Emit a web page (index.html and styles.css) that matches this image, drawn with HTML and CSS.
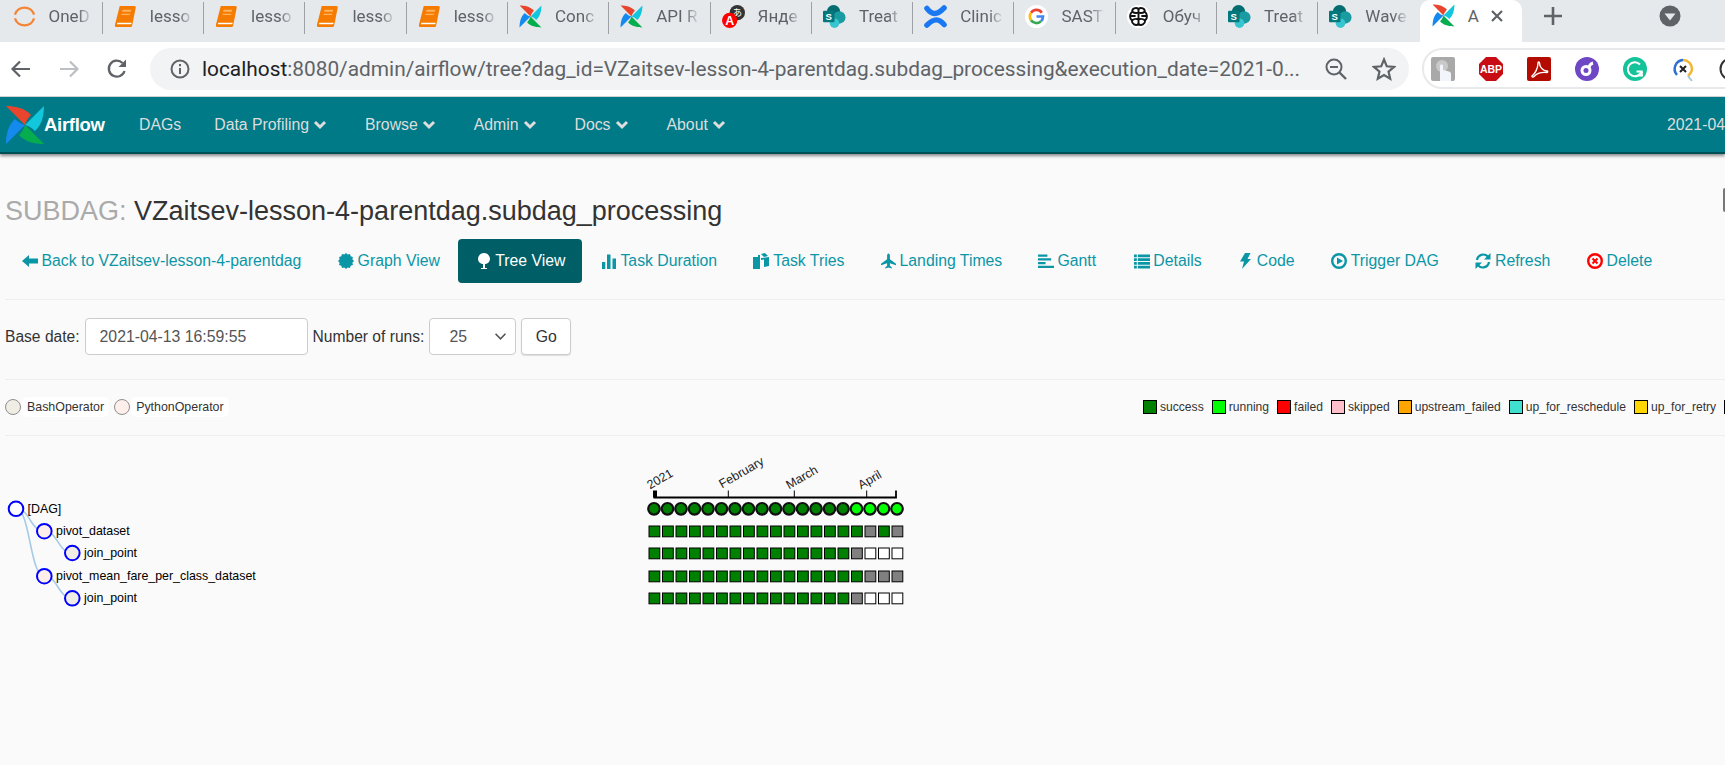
FILE: index.html
```html
<!DOCTYPE html>
<html lang="en">
<head>
    <meta charset="UTF-8">
    <meta name="viewport" content="width=device-width, initial-scale=1.0">
    <title>Airflow - Tree View</title>
    <link rel="stylesheet" href="styles.css">
</head>
<body>
    <!-- shared icons -->
    <svg class="defs" width="0" height="0">
        <defs>
            <symbol id="pin" viewBox="0 0 40 40">
                <path fill="#e8452c" d="M1 1C10 1 20 3 26 10C23 13 21 16 20 20Z"/>
                <path fill="#12c6dc" d="M39 1C39 10 37 20 30 26C27 23 24 21 20 20Z"/>
                <path fill="#05ad4f" d="M39 39C30 39 20 37 14 30C17 27 19 24 20 20Z"/>
                <path fill="#1489ee" d="M1 39C1 30 3 20 10 14C13 17 16 19 20 20Z"/>
            </symbol>
            <symbol id="book" viewBox="0 0 24 24">
                <path fill="#f57c00" d="M6 1H21C22.5 1 23 2 22.600 3L19 21C18.700 22.500 18 23 16.500 23H3C1.300 23 .6 22 1 20.500Z"/>
                <path fill="#ffb35c" d="M9 5H18L17.500 7H8.500ZM8 9H17L16.700 10.500H7.700Z"/>
                <path fill="#fff" d="M3.500 18.500H18.500L18 20.200H3Z"/>
            </symbol>
            <symbol id="sharepoint" viewBox="0 0 24 24">
                <circle cx="11" cy="7" r="7" fill="#036c70"/>
                <circle cx="17" cy="13" r="6.500" fill="#1a9ba1"/>
                <circle cx="12" cy="19" r="5" fill="#37c6d0"/>
                <rect x="0" y="6" width="12" height="12" rx="1" fill="#03787c"/>
                <text class="fav-s" x="6" y="15.500">S</text>
            </symbol>
            <symbol id="chev" viewBox="0 0 14 10">
                <path d="M2 2L7 7L12 2" fill="none" stroke="currentColor" stroke-width="3"/>
            </symbol>
        </defs>
    </svg>

    <div class="tabs">
        <div class="tab">
            <svg class="fav" viewBox="0 0 24 24"><path d="M2 10A10.500 10.500 0 0 1 22 10" fill="none" stroke="#f58536" stroke-width="2.400"/><path d="M2 14A10.500 10.500 0 0 0 22 14" fill="none" stroke="#f58536" stroke-width="2.400"/></svg>
            <span class="tab-title">OneD</span>
        </div>
        <div class="tab"><svg class="fav"><use href="#book"/></svg><span class="tab-title">lesso</span></div>
        <div class="tab"><svg class="fav"><use href="#book"/></svg><span class="tab-title">lesso</span></div>
        <div class="tab"><svg class="fav"><use href="#book"/></svg><span class="tab-title">lesso</span></div>
        <div class="tab"><svg class="fav"><use href="#book"/></svg><span class="tab-title">lesso</span></div>
        <div class="tab"><svg class="fav"><use href="#pin"/></svg><span class="tab-title">Conc</span></div>
        <div class="tab"><svg class="fav"><use href="#pin"/></svg><span class="tab-title">API R</span></div>
        <div class="tab">
            <svg class="fav" viewBox="0 0 24 24">
                <circle cx="16" cy="8" r="8" fill="#333"/>
                <text class="fav-ja" x="16" y="11.500">あ</text>
                <circle cx="8" cy="16" r="8" fill="#f00"/>
                <text class="fav-a" x="8" y="20.500">A</text>
            </svg>
            <span class="tab-title">Янде</span>
        </div>
        <div class="tab"><svg class="fav"><use href="#sharepoint"/></svg><span class="tab-title">Treat</span></div>
        <div class="tab">
            <svg class="fav" viewBox="0 0 24 24">
                <path d="M3 3.500C8 10 13 11.500 21 3" fill="none" stroke="#1a78f2" stroke-width="5.600" stroke-linecap="round"/>
                <path d="M3 21C11 13 16 14.500 21 20.500" fill="none" stroke="#1a78f2" stroke-width="5.600" stroke-linecap="round"/>
            </svg>
            <span class="tab-title">Clinic</span>
        </div>
        <div class="tab">
            <svg class="fav" viewBox="0 0 24 24">
                <circle cx="12" cy="12" r="12" fill="#fff"/>
                <path d="M17.500 8A6.800 6.800 0 0 0 6.300 8.200" fill="none" stroke="#ea4335" stroke-width="2.800"/>
                <path d="M6.300 8.200A6.800 6.800 0 0 0 6.300 15.800" fill="none" stroke="#fbbc05" stroke-width="2.800"/>
                <path d="M6.300 15.800A6.800 6.800 0 0 0 16.800 16.800" fill="none" stroke="#34a853" stroke-width="2.800"/>
                <path d="M16.800 16.800A6.800 6.800 0 0 0 18.800 12H12" fill="none" stroke="#4285f4" stroke-width="2.800"/>
            </svg>
            <span class="tab-title">SAST</span>
        </div>
        <div class="tab">
            <svg class="fav" viewBox="0 0 24 24">
                <circle cx="12" cy="12" r="12" fill="#fff"/>
                <g fill="none" stroke="#111" stroke-width="2">
                    <path d="M12 4C9 2 5 4 5.500 7C2.500 9 2.500 14 5 16C5 20 9 22 12 20C15 22 19 20 19 16C21.500 14 21.500 9 18.500 7C19 4 15 2 12 4Z"/>
                    <path d="M12 4V20M5.500 7C8 9 9 9 12 8M18.500 7C16 9 15 9 12 8M5 16C8 14 9 14 12 15M19 16C16 14 15 14 12 15M4 11.500H9M15 11.500H20"/>
                </g>
            </svg>
            <span class="tab-title">Обуч</span>
        </div>
        <div class="tab"><svg class="fav"><use href="#sharepoint"/></svg><span class="tab-title">Treat</span></div>
        <div class="tab tab-last"><svg class="fav"><use href="#sharepoint"/></svg><span class="tab-title">Wave</span></div>
        <div class="tab-active">
            <svg class="fav"><use href="#pin"/></svg>
            <span class="tab-title tab-title-short">A</span>
            <svg class="tab-close" viewBox="0 0 12 12"><path d="M1 1L11 11M11 1L1 11" stroke="#5f6368" stroke-width="2.200"/></svg>
        </div>
        <div class="tab-rest">
            <svg class="new-tab" viewBox="0 0 20 20"><path d="M10 1V19M1 10H19" stroke="#5f6368" stroke-width="2.600"/></svg>
            <svg class="tab-menu" viewBox="0 0 22 22"><circle cx="11" cy="11" r="10.500" fill="#5f6368"/><path d="M5.500 8.500H16.500L11 15.500Z" fill="#e6e9ec"/></svg>
        </div>
    </div>

    <div class="toolbar">
        <svg class="tool-btn" viewBox="0 0 22 22"><path d="M20 11H3M10 3.500L2.500 11L10 18.500" fill="none" stroke="#5f6368" stroke-width="2.200"/></svg>
        <svg class="tool-btn tool-off" viewBox="0 0 22 22"><path d="M2 11H19M12 3.500L19.500 11L12 18.500" fill="none" stroke="#bcc0c4" stroke-width="2.200"/></svg>
        <svg class="tool-btn" viewBox="0 0 22 22"><path d="M18.500 13A8 8 0 1 1 16.500 5" fill="none" stroke="#5f6368" stroke-width="2.300"/><path d="M20 1.500V9H12.500Z" fill="#5f6368"/></svg>
        <div class="address">
            <svg class="addr-info" viewBox="0 0 20 20"><circle cx="10" cy="10" r="8.500" fill="none" stroke="#5f6368" stroke-width="2"/><path d="M10 9V15M10 5V7.300" stroke="#5f6368" stroke-width="2"/></svg>
            <span class="url"><b>localhost</b>:8080/admin/airflow/tree?dag_id=VZaitsev-lesson-4-parentdag.subdag_processing&amp;execution_date=2021-0...</span>
            <svg class="addr-zoom" viewBox="0 0 22 22"><circle cx="9" cy="9" r="7.500" fill="none" stroke="#5f6368" stroke-width="2"/><path d="M14.500 14.500L21 21" stroke="#5f6368" stroke-width="2.400"/><path d="M5 9H13" stroke="#5f6368" stroke-width="2"/></svg>
            <svg class="addr-star" viewBox="0 0 24 24"><path d="M12 2.500L14.800 9.300L22 9.900L16.500 14.600L18.200 21.700L12 18L5.800 21.700L7.500 14.600L2 9.900L9.200 9.300Z" fill="none" stroke="#5f6368" stroke-width="2.200"/></svg>
        </div>
        <div class="extensions">
            <svg class="ext" viewBox="0 0 24 24">
                <rect width="24" height="24" rx="2" fill="#a9a9a9"/>
                <circle cx="11" cy="9" r="6" fill="#c9c9c9"/>
                <path d="M9 24V9C9 7 12 7 12 9V13L18 14.500C19.500 15 20 16 20 17V24Z" fill="#f2f6fb"/>
            </svg>
            <svg class="ext" viewBox="0 0 24 24">
                <path d="M7 0H17L24 7V17L17 24H7L0 17V7Z" fill="#c70d13"/>
                <text class="ext-abp" x="12" y="16">ABP</text>
            </svg>
            <svg class="ext" viewBox="0 0 24 24">
                <rect width="24" height="24" rx="2" fill="#b30b00"/>
                <path d="M5 19C8 17 11 11 11 6C11 4.500 12.500 4.500 12.500 6C12.500 10 16 14 20 14C21 14 21 15.500 20 15.500C15 15 10 16 7 19.500C6 20.500 4.500 19.500 5 19Z" fill="none" stroke="#fff" stroke-width="1.400"/>
            </svg>
            <svg class="ext" viewBox="0 0 24 24">
                <circle cx="12" cy="12" r="12" fill="#6f47c4"/>
                <circle cx="11" cy="13.500" r="4" fill="none" stroke="#fff" stroke-width="3"/>
                <path d="M13.500 11C14.500 8 15.500 6.500 18 6" fill="none" stroke="#fff" stroke-width="3"/>
            </svg>
            <svg class="ext" viewBox="0 0 24 24">
                <circle cx="12" cy="12" r="12" fill="#15c39a"/>
                <path d="M17 7.500A7 7 0 1 0 18.500 14.500H13.500" fill="none" stroke="#fff" stroke-width="2"/>
                <path d="M15 18.500H19V14.500" fill="none" stroke="#fff" stroke-width="1.800"/>
            </svg>
            <svg class="ext ext-small" viewBox="0 0 24 24">
                <path d="M12 3A9 9 0 0 0 6 18" fill="none" stroke="#2f6fd0" stroke-width="2.500"/>
                <path d="M12 3A9 9 0 0 1 21 12C21 15 19 17 17 19" fill="none" stroke="#f2b632" stroke-width="2.500"/>
                <path d="M9 9L15 15M15 9L9 15" stroke="#222" stroke-width="2"/>
                <path d="M17 19L21 24" stroke="#a9c6d8" stroke-width="2"/>
            </svg>
            <svg class="ext" viewBox="0 0 24 24"><circle cx="12" cy="12" r="10.500" fill="none" stroke="#333" stroke-width="2"/></svg>
        </div>
    </div>

    <nav class="navbar">
        <svg class="logo"><use href="#pin"/></svg>
        <span class="brand">Airflow</span>
        <ul class="menu">
            <li>DAGs</li>
            <li>Data Profiling<svg class="caret"><use href="#chev"/></svg></li>
            <li>Browse<svg class="caret"><use href="#chev"/></svg></li>
            <li>Admin<svg class="caret"><use href="#chev"/></svg></li>
            <li>Docs<svg class="caret"><use href="#chev"/></svg></li>
            <li>About<svg class="caret"><use href="#chev"/></svg></li>
        </ul>
        <span class="clock">2021-04</span>
    </nav>

    <div class="edge-handle"></div>

    <main class="container">
        <h1 class="dag-title"><span class="dag-kind">SUBDAG:</span> VZaitsev-lesson-4-parentdag.subdag_processing</h1>

        <ul class="pills">
            <li>
                <svg class="ico" viewBox="0 0 16 16"><path d="M0 8L7 2V5.500H16V10.500H7V14Z"/></svg>
                Back to VZaitsev-lesson-4-parentdag
            </li>
            <li>
                <svg class="ico" viewBox="0 0 16 16"><path d="M16 8L14.380 9.710L14.930 12L12.670 12.670L12 14.930L9.710 14.380L8 16L6.290 14.380L4 14.930L3.330 12.670L1.070 12L1.620 9.710L0 8L1.620 6.290L1.070 4L3.330 3.330L4 1.070L6.290 1.620L8 0L9.710 1.620L12 1.070L12.670 3.330L14.930 4L14.380 6.290Z"/></svg>
                Graph View
            </li>
            <li class="active">
                <svg class="ico ico-tree" viewBox="0 0 14 16"><path d="M7 0C10.500 0 13 3 13 6C13 9 10 11 8 11V15H10V16H4V15H6V11C4 11 1 9 1 6C1 3 3.500 0 7 0Z"/></svg>
                Tree View
            </li>
            <li>
                <svg class="ico ico-w14" viewBox="0 0 14 16"><path d="M0 9H3.300V16H0ZM5 1.500H8.500V16H5ZM10.500 5.500H14V16H10.500Z"/></svg>
                Task Duration
            </li>
            <li>
                <svg class="ico" viewBox="0 0 16 16"><path d="M0 4H5V2L7 2V16H0ZM8 1L12 0L15 3L11 4ZM8 5L16 4V13L11 14V6.500L8 7Z"/></svg>
                Task Tries
            </li>
            <li>
                <svg class="ico ico-w15" viewBox="0 0 16 16"><path d="M8 0C9 0 9.500 1 9.500 2.500V6L16 11V12.500L9.500 10.500V13L11.500 15V16L8 15L4.500 16V15L6.500 13V10.500L0 12.500V11L6.500 6V2.500C6.500 1 7 0 8 0Z"/></svg>
                Landing Times
            </li>
            <li class="pill-tight">
                <svg class="ico ico-w17" viewBox="0 0 17 16"><path d="M0 1H10V3.500H0ZM0 5H14V7.500H0ZM0 9H8V11.500H0ZM0 13H17V15.500H0Z"/></svg>
                Gantt
            </li>
            <li class="pill-tight">
                <svg class="ico ico-w17" viewBox="0 0 17 16"><path d="M0 1H3V4H0ZM4 1H17V4H4ZM0 5H3V8H0ZM4 5H17V8H4ZM0 9H3V12H0ZM4 9H17V12H4ZM0 13H3V16H0ZM4 13H17V16H4Z"/></svg>
                Details
            </li>
            <li>
                <svg class="ico ico-bolt" viewBox="0 0 11 16"><path d="M5 0H10.500L7.500 6H11L2 16L4 8.500H0Z"/></svg>
                Code
            </li>
            <li>
                <svg class="ico" viewBox="0 0 16 16"><circle cx="8" cy="8" r="6.800" fill="none" stroke="currentColor" stroke-width="2.400"/><path d="M6 4.500L12 8L6 11.500Z"/></svg>
                Trigger DAG
            </li>
            <li>
                <svg class="ico" viewBox="0 0 16 16"><path d="M2 7A6.300 6.300 0 0 1 12.800 3.500M14 9A6.300 6.300 0 0 1 3.200 12.500" fill="none" stroke="currentColor" stroke-width="2.200"/><path d="M15.500 0V6.500H9ZM.5 16V9.500H7Z"/></svg>
                Refresh
            </li>
            <li>
                <svg class="ico" viewBox="0 0 16 16"><circle cx="8" cy="8" r="6.800" fill="none" stroke="#f00" stroke-width="2.400"/><path d="M5.500 5.500L10.500 10.500M10.500 5.500L5.500 10.500" stroke="#f00" stroke-width="2"/></svg>
                Delete
            </li>
        </ul>

        <hr class="rule rule-pills">

        <form class="run-form">
            <label for="base-date">Base date:</label>
            <input id="base-date" class="date-input" type="text" value="2021-04-13 16:59:55">
            <label for="num-runs">Number of runs:</label>
            <div class="select-wrap">
                <select id="num-runs" class="runs-select"><option>25</option></select>
                <svg class="select-arrow" viewBox="0 0 14 10"><path d="M1.500 2L7 7.500L12.500 2" fill="none" stroke="#555" stroke-width="1.800"/></svg>
            </div>
            <button class="go-btn" type="button">Go</button>
        </form>

        <hr class="rule rule-form">

        <div class="legends">
            <div class="op-legend">
                <span class="op-dot op-bash"></span><span class="op-name">BashOperator</span>
                <span class="op-dot op-python"></span><span class="op-name">PythonOperator</span>
            </div>
            <div class="state-legend">
                <span class="state"><i class="st-success"></i>success</span>
                <span class="state"><i class="st-running"></i>running</span>
                <span class="state"><i class="st-failed"></i>failed</span>
                <span class="state"><i class="st-skipped"></i>skipped</span>
                <span class="state"><i class="st-upstream"></i>upstream_failed</span>
                <span class="state"><i class="st-resched"></i>up_for_reschedule</span>
                <span class="state"><i class="st-retry"></i>up_for_retry</span>
                <span class="state"><i class="st-queued"></i></span>
            </div>
        </div>

        <hr class="rule rule-legend">

        <!-- viewBox uses page coordinates so the d3-ish numbers stay readable -->
        <svg class="tree" width="1725" height="330" viewBox="0 436.500 1725 330">
            <g class="links">
                <path d="M16 509C30 509 30 531.500 44 531.500"/>
                <path d="M16 509C30 509 30 576.500 44 576.500"/>
                <path d="M44 531.500C58 531.500 58 553.500 72.500 553.500"/>
                <path d="M44 576.500C58 576.500 58 598.800 72.500 598.800"/>
            </g>
            <g class="nodes">
                <circle class="n-dag" cx="16" cy="509.300" r="7.300"/>
                <circle class="n-py" cx="44.300" cy="531.700" r="7.300"/>
                <circle class="n-bash" cx="72.300" cy="553.500" r="7.300"/>
                <circle class="n-py" cx="44.300" cy="576.700" r="7.300"/>
                <circle class="n-bash" cx="72.300" cy="598.800" r="7.300"/>
            </g>
            <g class="labels">
                <text x="27.500" y="513.500">[DAG]</text>
                <text x="56" y="535.800">pivot_dataset</text>
                <text x="84" y="557.500">join_point</text>
                <text x="56" y="580.800">pivot_mean_fare_per_class_dataset</text>
                <text x="84" y="602.800">join_point</text>
            </g>

            <g class="axis">
                <path class="domain" d="M653.500 498H896V491"/>
                <path class="domain-start" d="M653 491H657V498H653Z"/>
                <path class="tick" d="M728.300 491V498M794.300 491V498M866.700 491V498"/>
                <text transform="translate(650 490) rotate(-30)">2021</text>
                <text transform="translate(722 489) rotate(-30)">February</text>
                <text transform="translate(789 490) rotate(-30)">March</text>
                <text transform="translate(861 490) rotate(-30)">April</text>
            </g>

            <g class="dag-runs">
                <circle class="ok" cx="654" cy="509.300" r="5.800"/>
                <circle class="ok" cx="667.500" cy="509.300" r="5.800"/>
                <circle class="ok" cx="681" cy="509.300" r="5.800"/>
                <circle class="ok" cx="694.500" cy="509.300" r="5.800"/>
                <circle class="ok" cx="708" cy="509.300" r="5.800"/>
                <circle class="ok" cx="721.500" cy="509.300" r="5.800"/>
                <circle class="ok" cx="735" cy="509.300" r="5.800"/>
                <circle class="ok" cx="748.500" cy="509.300" r="5.800"/>
                <circle class="ok" cx="762" cy="509.300" r="5.800"/>
                <circle class="ok" cx="775.500" cy="509.300" r="5.800"/>
                <circle class="ok" cx="789" cy="509.300" r="5.800"/>
                <circle class="ok" cx="802.500" cy="509.300" r="5.800"/>
                <circle class="ok" cx="816" cy="509.300" r="5.800"/>
                <circle class="ok" cx="829.500" cy="509.300" r="5.800"/>
                <circle class="ok" cx="843" cy="509.300" r="5.800"/>
                <circle class="run" cx="856.500" cy="509.300" r="5.800"/>
                <circle class="run" cx="870" cy="509.300" r="5.800"/>
                <circle class="run" cx="883.500" cy="509.300" r="5.800"/>
                <circle class="run" cx="897" cy="509.300" r="5.800"/>
            </g>

            <defs>
                <g id="ok-row">
                    <rect class="ok" x="649" width="10.800" height="10.800"/>
                    <rect class="ok" x="662.500" width="10.800" height="10.800"/>
                    <rect class="ok" x="676" width="10.800" height="10.800"/>
                    <rect class="ok" x="689.500" width="10.800" height="10.800"/>
                    <rect class="ok" x="703" width="10.800" height="10.800"/>
                    <rect class="ok" x="716.500" width="10.800" height="10.800"/>
                    <rect class="ok" x="730" width="10.800" height="10.800"/>
                    <rect class="ok" x="743.500" width="10.800" height="10.800"/>
                    <rect class="ok" x="757" width="10.800" height="10.800"/>
                    <rect class="ok" x="770.500" width="10.800" height="10.800"/>
                    <rect class="ok" x="784" width="10.800" height="10.800"/>
                    <rect class="ok" x="797.500" width="10.800" height="10.800"/>
                    <rect class="ok" x="811" width="10.800" height="10.800"/>
                    <rect class="ok" x="824.500" width="10.800" height="10.800"/>
                    <rect class="ok" x="838" width="10.800" height="10.800"/>
                </g>
            </defs>
            <g class="cells" transform="translate(0 526.500)">
                <use href="#ok-row"/>
                <rect class="ok" x="851.500" width="10.800" height="10.800"/>
                <rect class="off" x="865" width="10.800" height="10.800"/>
                <rect class="ok" x="878.500" width="10.800" height="10.800"/>
                <rect class="off" x="892" width="10.800" height="10.800"/>
            </g>
            <g class="cells" transform="translate(0 548.500)">
                <use href="#ok-row"/>
                <rect class="off" x="851.500" width="10.800" height="10.800"/>
                <rect class="none" x="865" width="10.800" height="10.800"/>
                <rect class="none" x="878.500" width="10.800" height="10.800"/>
                <rect class="none" x="892" width="10.800" height="10.800"/>
            </g>
            <g class="cells" transform="translate(0 571.500)">
                <use href="#ok-row"/>
                <rect class="ok" x="851.500" width="10.800" height="10.800"/>
                <rect class="off" x="865" width="10.800" height="10.800"/>
                <rect class="off" x="878.500" width="10.800" height="10.800"/>
                <rect class="off" x="892" width="10.800" height="10.800"/>
            </g>
            <g class="cells" transform="translate(0 593.500)">
                <use href="#ok-row"/>
                <rect class="off" x="851.500" width="10.800" height="10.800"/>
                <rect class="none" x="865" width="10.800" height="10.800"/>
                <rect class="none" x="878.500" width="10.800" height="10.800"/>
                <rect class="none" x="892" width="10.800" height="10.800"/>
            </g>
        </svg>
    </main>
</body>
</html>
```

FILE: styles.css
```css
html, body {
    height: 100%;
}
body {
    margin: 0;
    overflow: hidden;
    font-family: "Liberation Sans", Arial, sans-serif;
    font-size: 15.8px;
    color: #333;
    background: #fafafa;
}
.defs {
    position: absolute;
}
.fav-s {
    font: bold 10px "Liberation Sans", sans-serif;
    fill: #fff;
    text-anchor: middle;
}
.fav-ja {
    font: 10px "Noto Sans CJK JP", sans-serif;
    fill: #fff;
    text-anchor: middle;
}
.fav-a {
    font: bold 13px "Liberation Sans", sans-serif;
    fill: #fff;
    text-anchor: middle;
}

/* browser tabs */
.tabs {
    display: flex;
    height: 42px;
    padding-left: 1.5px;
    background: #e6e9ec;
    font-family: Roboto, sans-serif;
    font-size: 17px;
    color: #5f6368;
}
.tab {
    box-sizing: border-box;
    display: flex;
    align-items: center;
    flex: 0 0 101.3px;
    height: 32px;
    margin-top: 2px;
    padding-left: 11px;
    border-right: 1px solid #9da1a5;
}
.tab-last {
    border-right: 0;
}
.fav {
    flex: none;
    width: 23px;
    height: 23px;
    margin-top: -4px;
}
.tab-title {
    width: 44px;
    margin-left: 13px;
    margin-top: -4px;
    overflow: hidden;
    white-space: nowrap;
    -webkit-mask-image: linear-gradient(to right, #000 65%, transparent);
    mask-image: linear-gradient(to right, #000 65%, transparent);
}
.tab-active {
    display: flex;
    align-items: center;
    box-sizing: border-box;
    flex: 0 0 102px;
    height: 42px;
    padding-left: 12px;
    background: #fff;
    border-radius: 10px 10px 0 0;
}
.tab-active .fav {
    margin-top: -11px;
}
.tab-active .tab-title {
    margin-top: -11px;
}
.tab-title-short {
    width: 16px;
    -webkit-mask-image: none;
    mask-image: none;
}
.tab-close {
    width: 12px;
    height: 12px;
    margin: -10px 0 0 7px;
}
.tab-rest {
    display: flex;
    flex: 1;
    align-items: center;
    padding-bottom: 10px;
}
.new-tab {
    width: 20px;
    height: 20px;
    margin-left: 21px;
}
.tab-menu {
    width: 22px;
    height: 22px;
    margin-left: 96px;
}

/* address bar row */
.toolbar {
    box-sizing: border-box;
    display: flex;
    align-items: center;
    height: 55px;
    padding: 0 0 1px 10px;
    background: #fff;
    border-bottom: 1px solid #d4d6d8;
}
.tool-btn {
    flex: none;
    width: 22px;
    height: 22px;
    margin-right: 26px;
}
.address {
    box-sizing: border-box;
    display: flex;
    align-items: center;
    flex: none;
    width: 1259.5px;
    height: 42px;
    margin-left: -4.5px;
    padding-left: 20px;
    background: #f1f3f4;
    border-radius: 21px;
}
.addr-info {
    flex: none;
    width: 20px;
    height: 20px;
}
.url {
    flex: none;
    width: 1100px;
    margin-left: 12.5px;
    font-family: Roboto, sans-serif;
    font-size: 20.85px;
    color: #5f6368;
    white-space: nowrap;
}
.url b {
    font-weight: normal;
    color: #202124;
}
.addr-zoom {
    flex: none;
    width: 22px;
    height: 22px;
    margin-left: 23px;
}
.addr-star {
    flex: none;
    width: 24px;
    height: 24px;
    margin-left: 25px;
}
.extensions {
    box-sizing: border-box;
    display: flex;
    align-items: center;
    flex: none;
    width: 320px;
    height: 41px;
    margin-left: 13px;
    padding-left: 7px;
    background: #fff;
    border: 2px solid #e8e9ea;
    border-right: 0;
    border-radius: 20px 0 0 20px;
}
.ext {
    flex: none;
    width: 24px;
    height: 24px;
    margin-right: 24px;
}
.ext-abp {
    font: bold 10.5px "Liberation Sans", sans-serif;
    fill: #fff;
    text-anchor: middle;
}

/* airflow nav */
.navbar {
    box-sizing: border-box;
    display: flex;
    align-items: center;
    height: 57px;
    padding-left: 5px;
    color: #ddd;
    background: #007a87;
    border-bottom: 2px solid #004f57;
    box-shadow: 0 2px 3px #8a8a8a;
}
.logo {
    flex: none;
    width: 40px;
    height: 40px;
}
.brand {
    margin-left: -1px;
    font-size: 18.5px;
    font-weight: bold;
    letter-spacing: -.3px;
    color: #fff;
}
.menu {
    display: flex;
    margin: 0 0 0 18px;
    padding: 0;
    list-style: none;
}
.menu li {
    display: flex;
    align-items: center;
    padding: 0 16.5px;
}
.caret {
    width: 14px;
    height: 10px;
    margin: 1px 5px 0 4px;
}
.clock {
    margin-left: auto;
    white-space: nowrap;
}
.edge-handle {
    position: absolute;
    top: 188px;
    right: 0;
    width: 2.5px;
    height: 24px;
    background: #777;
    border-radius: 2px 0 0 2px;
}

/* page */
.container {
    padding-left: 5px;
}
.dag-title {
    margin: 42px 0 13px;
    font-size: 27px;
    font-weight: normal;
    line-height: 30px;
}
.dag-kind {
    color: #aaa;
}
.pills {
    display: flex;
    gap: 2.2px;
    margin: 0;
    padding: 0;
    list-style: none;
    color: #0b96a6;
}
.pills li {
    display: flex;
    align-items: center;
    height: 44px;
    padding: 0 17.5px 0 16.5px;
    white-space: nowrap;
    border-radius: 4px;
}
.pills .active {
    margin: 0 2px 0 -2px;
    padding: 0 16.4px 0 19.6px;
    color: #fff;
    background: #005f66;
}
.pills .pill-tight {
    padding-right: 19.5px;
}
.ico {
    flex: none;
    width: 16px;
    height: 16px;
    margin-right: 4px;
    fill: currentColor;
}
.ico-tree {
    width: 14px;
}
.ico-w14 {
    width: 14px;
}
.ico-w15 {
    width: 15px;
}
.ico-w17 {
    width: 16px;
    margin-right: 3px;
}
.ico-bolt {
    width: 11px;
    margin-right: 6px;
}
.rule {
    height: 1px;
    margin: 0;
    background: #eee;
    border: 0;
}
.rule-pills {
    margin: 16px 0 18px;
}
.rule-form {
    margin: 24px 0 15px;
}
.rule-legend {
    margin: 16px 0 0;
}
.run-form {
    display: flex;
    align-items: center;
    height: 37px;
    gap: 5px;
    font-size: 15.6px;
}
.date-input {
    box-sizing: border-box;
    width: 223px;
    height: 37px;
    padding: 0 14px;
    font: 15.8px "Liberation Sans", sans-serif;
    color: #555;
    background: #fff;
    border: 1px solid #ccc;
    border-radius: 4px;
}
.select-wrap {
    position: relative;
    width: 87px;
    height: 37px;
}
.runs-select {
    box-sizing: border-box;
    width: 87px;
    height: 37px;
    padding: 0 19px;
    font: 15.8px "Liberation Sans", sans-serif;
    color: #555;
    background: #fff;
    border: 1px solid #ccc;
    border-radius: 4px;
    -webkit-appearance: none;
    appearance: none;
}
.select-arrow {
    position: absolute;
    top: 14px;
    right: 9px;
    width: 13px;
    height: 9px;
}
.go-btn {
    box-sizing: border-box;
    width: 50px;
    height: 37px;
    font: 15.8px "Liberation Sans", sans-serif;
    color: #333;
    background: #fff;
    border: 1px solid #ccc;
    border-radius: 4px;
    box-shadow: 0 1px 1px #ddd;
}

/* legends */
.legends {
    display: flex;
    align-items: center;
    height: 24px;
    font-size: 12.1px;
}
.op-legend {
    display: flex;
    align-items: center;
    flex: none;
    width: 1138px;
    font-size: 12.4px;
}
.op-dot {
    box-sizing: border-box;
    flex: none;
    width: 16px;
    height: 16px;
    border: 1px solid #8e8e8e;
    border-radius: 50%;
}
.op-bash {
    background: #f0ede4;
}
.op-python {
    margin-left: 5px;
    background: #ffefeb;
}
.op-name {
    margin-left: 1px;
    padding: 3px 5px;
    background: #fff;
    border-radius: 5px;
}
.state-legend {
    display: flex;
    flex: none;
    align-items: center;
    gap: 8px;
    white-space: nowrap;
}
.state {
    display: flex;
    align-items: center;
    gap: 3px;
}
.state i {
    box-sizing: border-box;
    flex: none;
    width: 14px;
    height: 14px;
    border: 1px solid #000;
}
.st-success { background: #008000; }
.st-running { background: #00ff00; }
.st-failed { background: #ff0000; }
.st-skipped { background: #ffc0cb; }
.st-upstream { background: #ffa500; }
.st-resched { background: #40e0d0; }
.st-retry { background: #ffd700; }
.st-queued { background: #808080; }

/* tree view */
.tree {
    display: block;
    margin-left: -5px;
}
.links path {
    fill: none;
    stroke: #a6cbe6;
    stroke-width: 1.6px;
}
.nodes circle {
    stroke: #0000ff;
    stroke-width: 2px;
}
.n-dag { fill: #fff; }
.n-py { fill: #ffefeb; }
.n-bash { fill: #f0ede4; }
.labels text {
    font: 12.4px "Liberation Sans", sans-serif;
    fill: #000;
}
.axis text {
    font: 12.4px "Liberation Sans", sans-serif;
    fill: #222;
}
.domain {
    fill: none;
    stroke: #000;
    stroke-width: 1.8px;
}
.domain-start {
    fill: #000;
}
.tick {
    fill: none;
    stroke: #000;
    stroke-width: 1px;
}
.dag-runs circle {
    stroke: #111;
    stroke-width: 2.2px;
}
.dag-runs .ok { fill: #008000; }
.dag-runs .run { fill: #00ff00; }
.cells rect,
#ok-row rect {
    stroke: #000;
    stroke-width: 1px;
}
.ok { fill: #008000; }
.off { fill: #808080; }
.none { fill: #fff; }
```
